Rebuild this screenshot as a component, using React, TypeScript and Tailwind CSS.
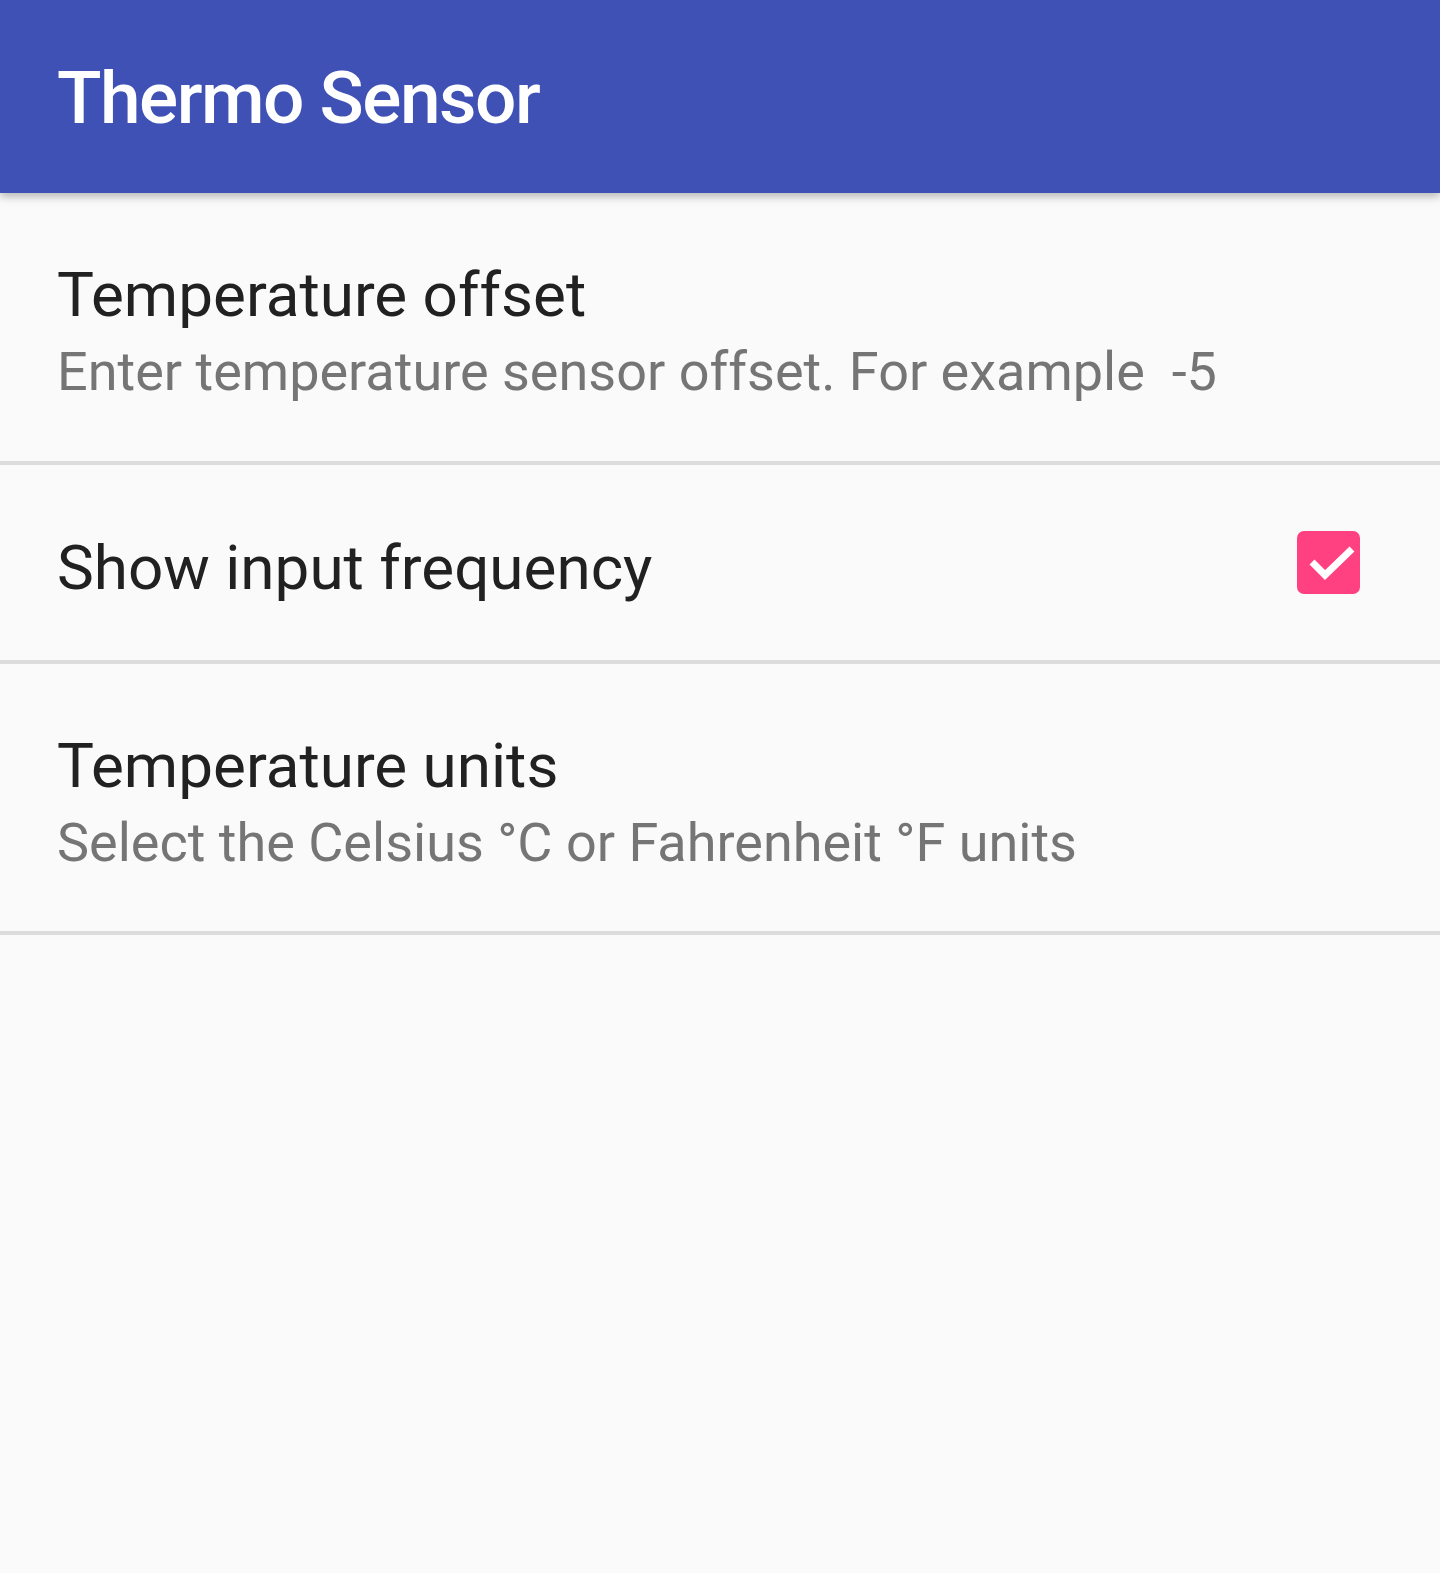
const font = { fontFamily: "Roboto, 'Noto Sans', sans-serif" }

function Divider() {
  return <div className="h-[4px] w-full bg-[#dcdcdc]" />
}

function TextPref({ title, summary, extra }: { title: string; summary: string; extra?: boolean }) {
  return (
    <div className={"flex flex-col gap-[9px] px-[57px] pt-[65px] " + (extra ? "pb-[59px]" : "pb-[58px]")}>
      <div className="text-[62px] leading-[74px] text-[#212121]">{title}</div>
      <div className="whitespace-pre text-[54px] leading-[61px] text-[#757575]">{summary}</div>
    </div>
  )
}

export default function App() {
  return (
    <div className="min-h-[1573px] w-full bg-[#fafafa]" style={font}>
      <header className="relative z-10 h-[193px] bg-[#3f51b5] px-[57px] pt-[55px] shadow-[0_4px_8px_rgba(0,0,0,0.25)]">
        <h1 className="text-[73px] font-medium leading-[87px] tracking-[-1.5px] text-white">Thermo Sensor</h1>
      </header>

      <TextPref title="Temperature offset" summary="Enter temperature sensor offset. For example  -5" extra />
      <Divider />

      <div className="flex h-[195px] items-center justify-between pl-[57px] pr-[80px]">
        <div className="pt-[10px] text-[62px] leading-[74px] text-[#212121]">Show input frequency</div>
        <div className="h-[63px] w-[63px] rounded-[7px] bg-[#ff4081]">
          <svg viewBox="0 0 63 63" className="h-full w-full">
            <polyline points="15,31 28,44 55,18" fill="none" stroke="#ffffff" strokeWidth="7" />
          </svg>
        </div>
      </div>
      <Divider />

      <TextPref title="Temperature units" summary="Select the Celsius °C or Fahrenheit °F units" />
      <Divider />
    </div>
  )
}
